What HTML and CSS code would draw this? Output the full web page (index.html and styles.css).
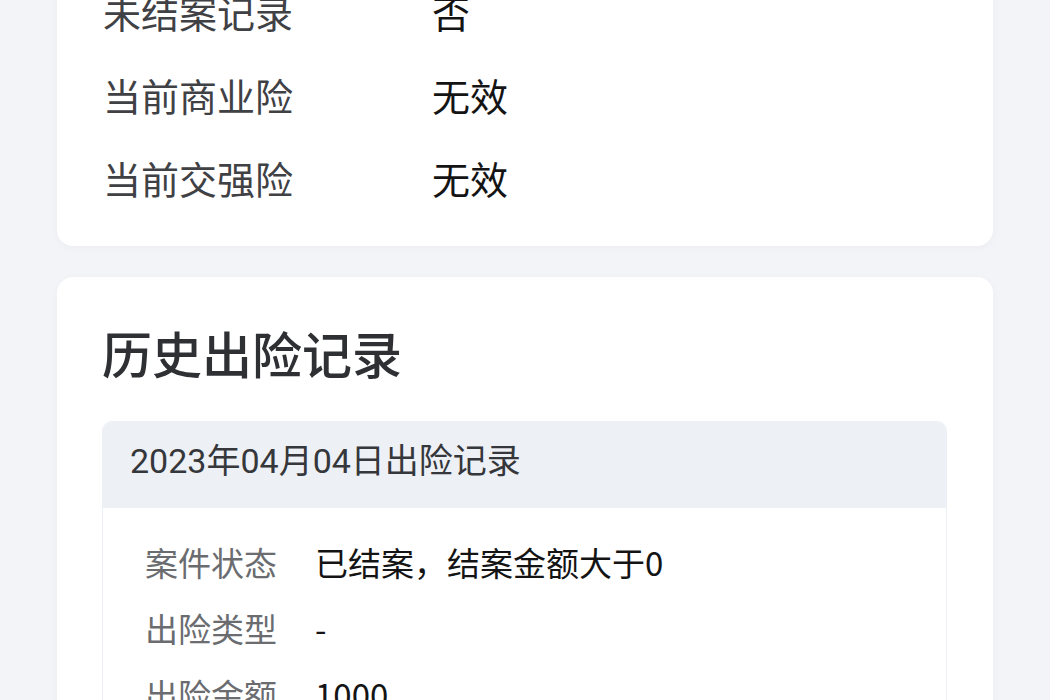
FILE: index.html
```html
<!DOCTYPE html>
<html lang="zh-CN">
<head>
<meta charset="utf-8">
<title>出险记录</title>
<link rel="stylesheet" href="styles.css">
</head>
<body>
<div class="page">
  <section class="card card-info">
    <div class="info-row"><span class="info-label">未结案记录</span><span class="info-value">否</span></div>
    <div class="info-row"><span class="info-label">当前商业险</span><span class="info-value">无效</span></div>
    <div class="info-row"><span class="info-label">当前交强险</span><span class="info-value">无效</span></div>
  </section>
  <section class="card card-history">
    <h2 class="card-title">历史出险记录</h2>
    <div class="record">
      <div class="record-head">2023年04月04日出险记录</div>
      <div class="record-body">
        <div class="rec-row"><span class="rec-label">案件状态</span><span class="rec-value">已结案，结案金额大于0</span></div>
        <div class="rec-row"><span class="rec-label">出险类型</span><span class="rec-value">-</span></div>
        <div class="rec-row"><span class="rec-label">出险金额</span><span class="rec-value">1000</span></div>
        <div class="rec-row"><span class="rec-label">维修项目</span><span class="rec-value">-</span></div>
      </div>
    </div>
  </section>
</div>
</body>
</html>
```

FILE: styles.css
```css
* { box-sizing: border-box; }
html, body { margin: 0; padding: 0; }
body {
  background: #f3f4f7;
  font-family: "Noto Sans CJK SC", "Noto Sans", sans-serif;
  height: 700px;
  overflow: hidden;
}
.page {
  margin-top: -50px;
  padding: 0 57px;
  display: flex;
  flex-direction: column;
  gap: 31px;
}
.card {
  background: #ffffff;
  border-radius: 16px;
  box-shadow: 0 2px 8px rgba(30, 40, 60, 0.03);
}
.card-info {
  padding: 20px 46px 27px;
}
.info-row {
  display: grid;
  grid-template-columns: 329px 1fr;
  align-items: center;
  height: 83px;
  font-size: 38px;
}
.info-label { color: #3f4145; }
.info-value { color: #141414; }
.card-history {
  padding: 45px 46px 40px 45px;
}
.card-title {
  margin: 0;
  font-size: 50px;
  line-height: 60px;
  font-weight: 500;
  color: #2e3034;
}
.record {
  margin-top: 39px;
  border: 1px solid #eceff4;
  border-radius: 10px;
  overflow: hidden;
}
.record-head {
  background: #edf0f5;
  height: 86px;
  padding: 0 0 14px 27px;
  display: flex;
  align-items: center;
  font-family: "Roboto", "Noto Sans CJK SC", sans-serif;
  font-size: 34px;
  color: #35373b;
}
.record-body {
  background: #fff;
  padding: 21px 0 20px 42px;
}
.rec-row {
  display: flex;
  align-items: center;
  height: 66px;
  font-size: 33px;
  gap: 38px;
}
.rec-label { color: #6a6c70; }
.rec-value { color: #141414; }
```
